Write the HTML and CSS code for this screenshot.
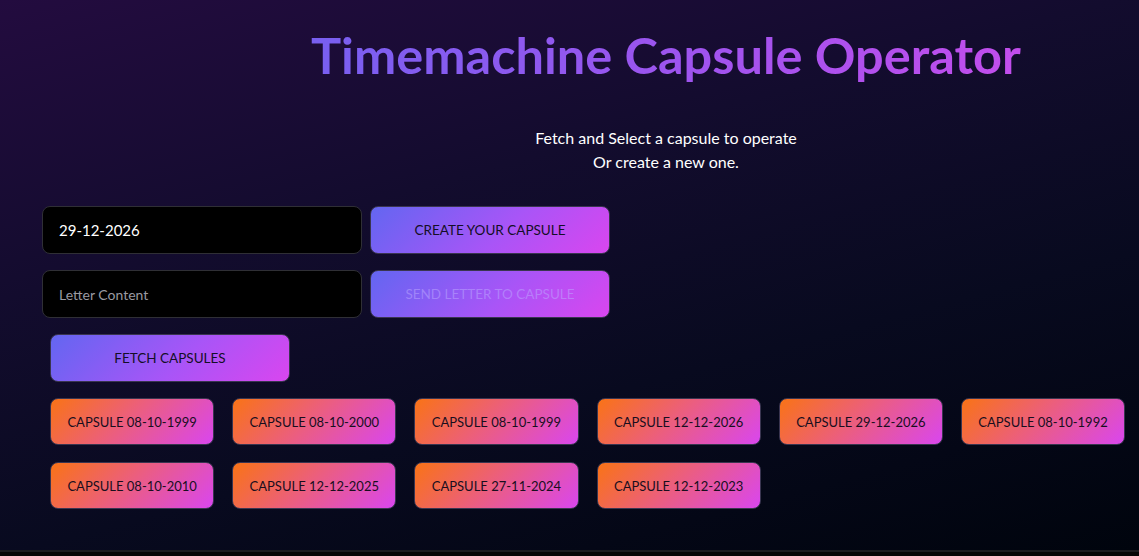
FILE: index.html
```html
<!DOCTYPE html>
<html lang="en">
<head>
<meta charset="utf-8">
<title>Timemachine Capsule Operator</title>
<link rel="stylesheet" href="styles.css">
</head>
<body>
<main class="page">
  <header class="hero">
    <h1 class="title">Timemachine Capsule Operator</h1>
    <p class="subtitle">Fetch and Select a capsule to operate<br>Or create a new one.</p>
  </header>
  <section class="controls">
    <div class="row">
      <input class="field field-date" type="text" value="29-12-2026">
      <button class="btn btn-primary">CREATE YOUR CAPSULE</button>
    </div>
    <div class="row">
      <input class="field" type="text" placeholder="Letter Content">
      <button class="btn btn-primary" disabled>SEND LETTER TO CAPSULE</button>
    </div>
    <div class="row row-inset">
      <button class="btn btn-primary">FETCH CAPSULES</button>
    </div>
    <div class="capsules">
      <button class="capsule">CAPSULE 08-10-1999</button>
      <button class="capsule">CAPSULE 08-10-2000</button>
      <button class="capsule">CAPSULE 08-10-1999</button>
      <button class="capsule">CAPSULE 12-12-2026</button>
      <button class="capsule">CAPSULE 29-12-2026</button>
      <button class="capsule">CAPSULE 08-10-1992</button>
      <button class="capsule">CAPSULE 08-10-2010</button>
      <button class="capsule">CAPSULE 12-12-2025</button>
      <button class="capsule">CAPSULE 27-11-2024</button>
      <button class="capsule">CAPSULE 12-12-2023</button>
    </div>
  </section>
</main>
<div class="bottom-bar"></div>
</body>
</html>
```

FILE: styles.css
```css
* { box-sizing: border-box; }

html, body {
  margin: 0;
  padding: 0;
  background: #050505;
}

body {
  font-family: Lato, "Open Sans", "DejaVu Sans", sans-serif;
  color: #ffffff;
}

.page {
  height: 550px;
  overflow: hidden;
  background: linear-gradient(165deg, #230c3f 0%, #130c2e 35%, #080a1f 65%, #00040d 100%);
}

.hero {
  margin-left: 193px;
  text-align: center;
  padding-top: 19px;
}

.title {
  margin: 0;
  font-size: 50.5px;
  line-height: 72px;
  font-weight: 700;
  background: linear-gradient(90deg, #6c63f1 0%, #a153ee 55%, #cf4bec 100%);
  -webkit-background-clip: text;
  background-clip: text;
  color: transparent;
}

.subtitle {
  margin: 35px 0 0;
  font-size: 16px;
  line-height: 24px;
  color: #ffffff;
}

.controls {
  padding: 32px 0 0 42px;
  display: flex;
  flex-direction: column;
  gap: 16px;
}

.row {
  display: flex;
  gap: 8px;
  align-items: center;
}

.row-inset {
  padding-left: 8px;
}

.field {
  width: 320px;
  height: 48px;
  background: #000;
  border: 1px solid #2f2f35;
  border-radius: 8px;
  padding: 0 16px;
  font-family: inherit;
  font-size: 14px;
  color: #ffffff;
  outline: none;
}

.field-date {
  font-size: 15px;
}

.field::placeholder {
  color: #9a9aa2;
}

.btn {
  width: 240px;
  height: 48px;
  border: 1px solid #3a3550;
  border-radius: 8px;
  font-family: inherit;
  font-size: 13.5px;
  color: #140e26;
  cursor: pointer;
}

.btn-primary {
  background: linear-gradient(135deg, #6366f1 0%, #a855f7 55%, #d946ef 100%);
}

.btn-primary:disabled {
  color: rgba(190, 170, 255, 0.5);
  cursor: default;
}

.capsules {
  padding-left: 8px;
  display: flex;
  flex-wrap: wrap;
  column-gap: 18px;
  row-gap: 17px;
  width: 1100px;
}

.capsule {
  height: 47px;
  padding: 0 16.4px;
  border: 1px solid #3a3550;
  border-radius: 8px;
  background: linear-gradient(135deg, #f97316 0%, #ec5f7a 45%, #d946ef 100%);
  font-family: inherit;
  font-size: 13px;
  color: #180e1e;
  cursor: pointer;
}

.bottom-bar {
  height: 6px;
  border-top: 2px solid #1c1c1f;
  background: #060606;
}
```
